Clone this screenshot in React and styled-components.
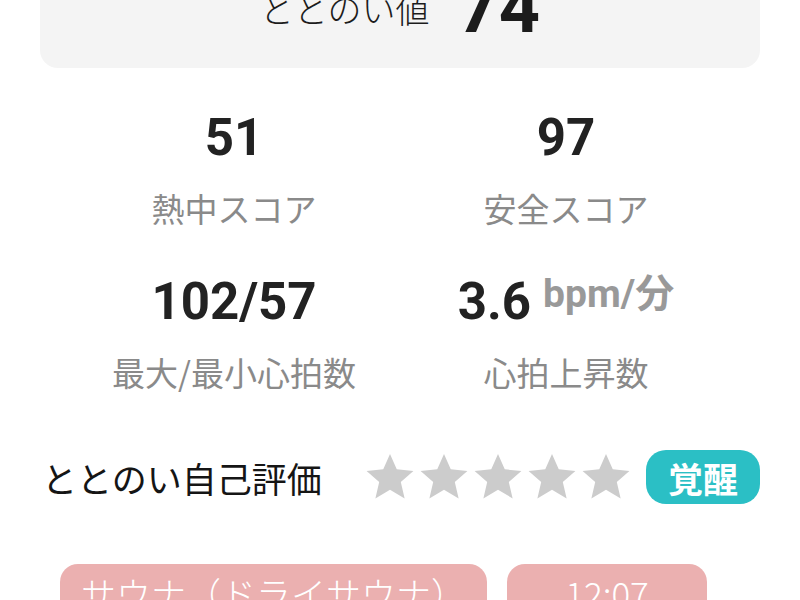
import React from 'react'
import styled, { createGlobalStyle } from 'styled-components'

const GlobalStyle = createGlobalStyle`
    html, body {
        margin: 0;
        padding: 0;
        background: #ffffff;
        overflow: hidden;
    }
    body {
        font-family: Roboto, "Noto Sans CJK JP", sans-serif;
    }
`

const Page = styled.div`
    width: 800px;
    height: 600px;
    overflow: hidden;
    display: flex;
    flex-direction: column;
`

const ScoreCard = styled.section`
    margin: -34px 40px 0;
    padding: 0 0 18px;
    background: #f4f4f4;
    border-radius: 0 0 18px 18px;
    display: flex;
    justify-content: center;
    align-items: center;
    gap: 28px;
`

const ScoreLabel = styled.span`
    font-family: "Noto Sans CJK JP", sans-serif;
    font-size: 34px;
    font-weight: 300;
    color: #1c1c1c;
`

const ScoreValue = styled.span`
    font-family: Roboto, sans-serif;
    font-weight: 700;
    font-size: 72px;
    line-height: 84px;
    color: #1c1c1c;
`

const StatsGrid = styled.div`
    width: 664px;
    margin: 40px auto 0;
    display: grid;
    grid-template-columns: 1fr 1fr;
    row-gap: 42px;
`

const Stat = styled.div`
    display: flex;
    flex-direction: column;
    align-items: center;
    gap: 18px;
`

const ValueRow = styled.div`
    display: flex;
    align-items: flex-start;
    gap: 12px;
    height: 60px;
`

const Value = styled.span`
    font-family: Roboto, sans-serif;
    font-weight: 700;
    font-size: 51px;
    line-height: 60px;
    color: #222222;
`

const Unit = styled.span`
    font-family: Roboto, "Noto Sans CJK JP", sans-serif;
    font-weight: 700;
    font-size: 39px;
    line-height: 44px;
    color: #999999;
`

const Label = styled.span`
    font-family: "Noto Sans CJK JP", sans-serif;
    font-size: 33px;
    line-height: 44px;
    color: #8a8a8a;
`

const EvalRow = styled.div`
    margin-top: 56px;
    padding: 0 40px 0 42px;
    display: flex;
    align-items: center;
    justify-content: space-between;
`

const EvalLabel = styled.span`
    font-family: "Noto Sans CJK JP", sans-serif;
    font-size: 35px;
    color: #151515;
`

const EvalRight = styled.div`
    display: flex;
    align-items: center;
    gap: 13px;
`

const Stars = styled.div`
    display: flex;
`

const Star = styled.svg`
    width: 54px;
    height: 54px;
    fill: #cccccc;
`

const Badge = styled.span`
    height: 54px;
    padding: 0 22px;
    border-radius: 20px;
    background: #2bbfc5;
    color: #ffffff;
    font-family: "Noto Sans CJK JP", sans-serif;
    font-weight: 700;
    font-size: 35px;
    display: flex;
    align-items: center;
`

const PillRow = styled.div`
    margin-top: 60px;
    padding: 0 60px;
    display: flex;
    gap: 20px;
`

const Pill = styled.span`
    height: 56px;
    min-width: ${p => p.$min || 0}px;
    padding: 0 21px;
    box-sizing: border-box;
    border-radius: 18px;
    background: #ebb0b0;
    color: #ffffff;
    font-family: "Noto Sans CJK JP", sans-serif;
    font-size: 35px;
    font-weight: 300;
    display: flex;
    justify-content: center;
    align-items: center;
`

const StarIcon = () => (
    <Star viewBox="0 0 24 24">
        <polygon points="12,1.8 15,8.6 22.4,9.3 16.8,14.2 18.5,21.5 12,17.7 5.5,21.5 7.2,14.2 1.6,9.3 9,8.6" />
    </Star>
)

const stats = [
    { value: '51', label: '熱中スコア' },
    { value: '97', label: '安全スコア' },
    { value: '102/57', label: '最大/最小心拍数' },
    { value: '3.6', unit: 'bpm/分', label: '心拍上昇数' },
]

const App = () => (
    <Page>
        <GlobalStyle />
        <ScoreCard>
            <ScoreLabel>ととのい値</ScoreLabel>
            <ScoreValue>74</ScoreValue>
        </ScoreCard>

        <StatsGrid>
            {stats.map(s => (
                <Stat key={s.label}>
                    <ValueRow>
                        <Value>{s.value}</Value>
                        {s.unit && <Unit>{s.unit}</Unit>}
                    </ValueRow>
                    <Label>{s.label}</Label>
                </Stat>
            ))}
        </StatsGrid>

        <EvalRow>
            <EvalLabel>ととのい自己評価</EvalLabel>
            <EvalRight>
                <Stars>
                    {[0, 1, 2, 3, 4].map(i => <StarIcon key={i} />)}
                </Stars>
                <Badge>覚醒</Badge>
            </EvalRight>
        </EvalRow>

        <PillRow>
            <Pill>サウナ（ドライサウナ）</Pill>
            <Pill $min={200}>12:07</Pill>
        </PillRow>
    </Page>
)

export default App
